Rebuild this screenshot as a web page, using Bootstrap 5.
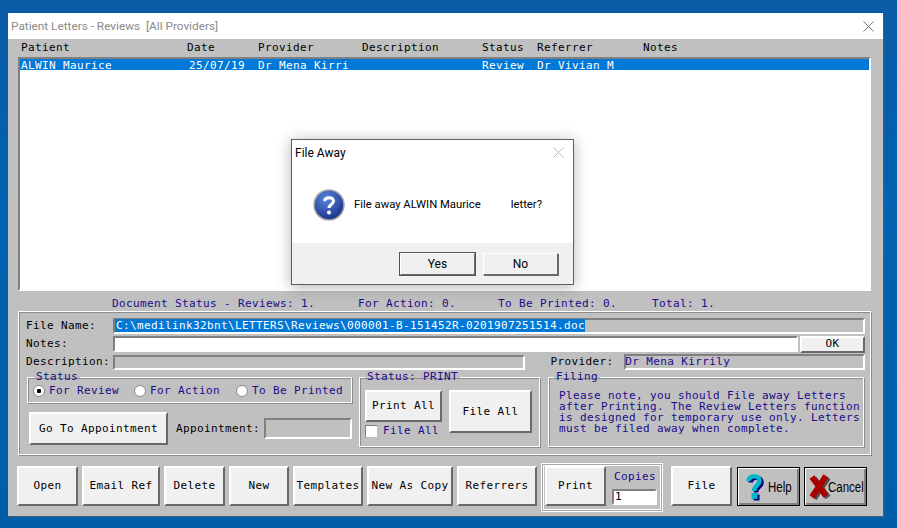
<!DOCTYPE html>
<html lang="en">
  <head>
    <meta charset="UTF-8" />
    <meta name="viewport" content="width=device-width, initial-scale=1.0" />
    <title>Patient Letters - Reviews</title>
    <link
      href="https://cdn.jsdelivr.net/npm/bootstrap@5.3.5/dist/css/bootstrap.min.css"
      rel="stylesheet"
    />
    <style>
      html, body { height: 100%; }
      body {
        margin: 0;
        background: linear-gradient(#0a5ba6, #0063b1 40%, #005ea8);
        overflow: hidden;
        font-family: "DejaVu Sans Mono", monospace;
        font-size: 11px;
        letter-spacing: 0.38px;
        line-height: 12px;
        color: #000;
      }
      .app-window {
        position: relative;
        width: 875px;
        height: 503px;
        margin: 13px 0 0 8px;
        background: #c0c0c0;
        box-shadow: 1px 1px 1px #3c5f80;
      }
      .title-bar {
        height: 26px;
        background: #fff;
        color: #8a8a8a;
        font-family: Roboto, sans-serif;
        font-size: 11.8px;
        letter-spacing: 0;
        padding-left: 3px;
      }
      .title-x { margin-right: 9px; }
      .main-area { padding: 0 12px 0 10px; }
      .col-heads { height: 18px; padding: 3px 0 0 3px; }
      .list-box {
        height: 234px;
        background: #fff;
        border: 2px solid;
        border-color: #808080 #fff #fff #808080;
      }
      .list-sel { background: #0078d7; color: #fff; height: 11px; padding-left: 1px; line-height: 13px; }
      .c1 { width: 166px; }
      .c2 { width: 71px; }
      .c3 { width: 104px; }
      .c4 { width: 120px; }
      .c5 { width: 55px; }
      .c6 { width: 106px; }
      .sel-date { padding-left: 2px; }
      .navy { color: #1a0a8c; }
      .count-line { height: 20px; padding: 7px 0 0 94px; }
      .s1 { width: 246px; }
      .s2 { width: 140px; }
      .s3 { width: 154px; }
      .etched {
        border: 1px solid #fff;
        box-shadow: inset 1px 1px 0 #8c8c8c, 1px 1px 0 #8c8c8c;
      }
      .doc-group { height: 144px; padding: 5px 5px 0 6px; }
      .form-line { height: 18px; }
      .line-label { width: 88px; padding-left: 1px; }
      .sunk {
        border: 2px solid;
        border-color: #808080 #fff #fff #808080;
        height: 16px;
        line-height: 12px;
        white-space: nowrap;
      }
      .sunk-white { background: #fff; }
      .f-file { width: 753px; }
      .f-file mark { background: #0078d7; color: #fff; padding: 0 0 0 1px; }
      .f-notes { width: 686px; }
      .f-desc { width: 413px; height: 15px; }
      .f-prov { width: 241px; text-indent: -1px; }
      .prov-label { width: 99px; padding-left: 25px; }
      .btn-raised {
        background: #f0f0f0;
        border: 2px solid;
        border-color: #fff #696969 #696969 #fff;
        border-radius: 0;
        padding: 0;
        font-family: inherit;
        font-size: inherit;
        letter-spacing: inherit;
        line-height: 12px;
        color: #000;
      }
      .ok-btn { width: 65px; height: 17px; margin-left: 2px; }
      .lower-part { margin: 0 0 0 2px; }
      .left-part { width: 325px; margin-right: 7px; }
      .legend-txt {
        float: none;
        width: auto;
        font-size: inherit;
        line-height: 12px;
        margin: 0;
        padding: 0 2px;
        color: #1a0a8c;
      }
      .status-set .legend-txt { margin-left: 6px; }
      .filing-set .legend-txt { margin-left: -5px; }
      .status-set { height: 32px; width: 325px; }
      .radio-row { height: 16px; padding: 0 0 0 5px; }
      .radio-mark {
        appearance: none;
        width: 12px;
        height: 12px;
        margin: 0 4px 0 0;
        border-radius: 50%;
        background: #fff;
        border: 1px solid #8c8c8c;
        flex: none;
      }
      .radio-mark:checked { background: radial-gradient(circle, #000 2px, #fff 2.5px); }
      .rad-a { width: 85px; }
      .rad-b { width: 86px; }
      .appt-line { margin: 9px 0 0 2px; }
      .appt-btn { width: 139px; height: 33px; }
      .appt-label { width: 96px; padding-left: 8px; }
      .f-appt { width: 88px; height: 21px; }
      .print-set { width: 181px; height: 76px; margin-right: 8px; padding: 7px 0 0 5px; }
      .pa-btn { width: 77px; height: 32px; display: block; }
      .fa-btn { width: 83px; height: 43px; margin-left: 7px; }
      .tick-row { margin-top: 3px; height: 12px; }
      .tick-box {
        appearance: none;
        width: 13px;
        height: 13px;
        margin: 0 5px 0 0;
        background: #fff;
        border: 1px solid;
        border-color: #808080 #c0c0c0 #c0c0c0 #808080;
      }
      .filing-set { width: 316px; height: 76px; padding: 7px 0 0 10px; line-height: 11px; white-space: nowrap; }
      .action-row { height: 49px; margin: 8px 0 0 -1px; }
      .act-btn { height: 40px; margin-top: 3px; margin-right: 4px; flex: none; }
      .w60 { width: 60px; }
      .w61 { width: 61px; }
      .w78 { width: 78px; }
      .w70 { width: 70px; }
      .w86 { width: 86px; }
      .w80 { width: 80px; }
      .print-box {
        width: 122px;
        height: 49px;
        border: 1px solid #fff;
        box-shadow: inset 0 0 0 1px #a6a6a6, inset 0 0 0 2px #fff;
        padding: 2px 0 0 3px;
        margin-right: 8px;
        flex: none;
      }
      .print-box .act-btn { margin: 0; width: 61px; }
      .copies-col { padding: 5px 0 0 6px; }
      .copies-txt { padding-left: 2px; margin-bottom: 6px; }
      .f-copies { width: 45px; padding-left: 1px; }
      .pic-btn {
        width: 63px;
        height: 39px;
        margin-top: 4px;
        margin-right: 4px;
        padding: 0;
        background: #c0c0c0;
        border: 1px solid #000;
        box-shadow: inset 1px 1px 0 #fff, inset -2px -2px 0 #808080;
        font-family: "Liberation Sans", sans-serif;
        font-size: 14px;
        letter-spacing: 0;
        flex: none;
      }
      .file-act { margin-right: 5px; }
      .pic-label { display: inline-block; flex: none; transform: scaleX(0.82); transform-origin: left center; }
      .help-pic { flex: none; margin: 0 4px 0 8px; }
      .cancel-pic { flex: none; margin: 0 -3px 0 4px; }
      .dialog-box {
        position: absolute;
        left: 283px;
        top: 126px;
        width: 283px;
        height: 146px;
        background: #fff;
        border: 1px solid #5f5f5f;
        box-shadow: 0 2px 14px rgba(0, 0, 0, 0.3);
        font-family: Roboto, sans-serif;
        font-size: 12px;
        letter-spacing: 0;
        line-height: 16px;
      }
      .dlg-title { height: 25px; padding-left: 3px; margin-bottom: 1px; }
      .dlg-x { margin-right: 9px; }
      .dlg-body { height: 77px; padding-left: 21px; font-size: 11.3px; }
      .dlg-icon { margin-right: 9px; }
      .dlg-gap { width: 30px; display: inline-block; }
      .dlg-foot { height: 41px; background: #f0f0f0; padding: 10px 15px 0 0; }
      .dlg-btn {
        width: 75px;
        height: 22px;
        margin-left: 8px;
        background: #f0f0f0;
        border: 1px solid;
        border-color: #fff #696969 #696969 #fff;
        box-shadow: 1px 1px 0 #696969;
        padding: 0;
        font-size: 12px;
      }
      .dlg-yes { outline: 1px solid #555; }
    </style>
  </head>
  <body>
    <div class="app-window">
      <div class="title-bar d-flex align-items-center justify-content-between">
        <span>Patient Letters - Reviews&nbsp; [All Providers]</span>
        <svg class="title-x" width="11" height="11" viewBox="0 0 11 11">
          <path d="M0.5 0.5 10.5 10.5M10.5 0.5 0.5 10.5" stroke="#777" fill="none" />
        </svg>
      </div>

      <div class="main-area">
        <div class="col-heads d-flex">
          <span class="c1">Patient</span>
          <span class="c2">Date</span>
          <span class="c3">Provider</span>
          <span class="c4">Description</span>
          <span class="c5">Status</span>
          <span class="c6">Referrer</span>
          <span>Notes</span>
        </div>
        <div class="list-box">
          <div class="list-sel d-flex">
            <span class="c1">ALWIN Maurice</span>
            <span class="c2 sel-date">25/07/19</span>
            <span class="c3">Dr Mena Kirri</span>
            <span class="c4"></span>
            <span class="c5">Review</span>
            <span class="c6">Dr Vivian M</span>
          </div>
        </div>
        <div class="count-line navy d-flex">
          <span class="s1">Document Status - Reviews: 1.</span>
          <span class="s2">For Action: 0.</span>
          <span class="s3">To Be Printed: 0.</span>
          <span>Total: 1.</span>
        </div>

        <div class="doc-group etched">
          <div class="form-line d-flex align-items-center">
            <span class="line-label">File Name:</span>
            <div class="sunk f-file"><mark>C:\medilink32bnt\LETTERS\Reviews\000001-B-151452R-0201907251514.doc</mark></div>
          </div>
          <div class="form-line d-flex align-items-center">
            <span class="line-label">Notes:</span>
            <div class="sunk sunk-white f-notes"></div>
            <button class="btn-raised ok-btn" type="button">OK</button>
          </div>
          <div class="form-line d-flex align-items-center">
            <span class="line-label">Description:</span>
            <div class="sunk f-desc"></div>
            <span class="prov-label">Provider:</span>
            <div class="sunk f-prov navy">Dr Mena Kirrily</div>
          </div>

          <div class="lower-part d-flex">
            <div class="left-part">
              <fieldset class="status-set etched">
                <legend class="legend-txt">Status</legend>
                <div class="radio-row d-flex align-items-center navy">
                  <input class="radio-mark" type="radio" name="st" checked />
                  <span class="rad-a">For Review</span>
                  <input class="radio-mark" type="radio" name="st" />
                  <span class="rad-b">For Action</span>
                  <input class="radio-mark" type="radio" name="st" />
                  <span>To Be Printed</span>
                </div>
              </fieldset>
              <div class="appt-line d-flex align-items-center">
                <button class="btn-raised appt-btn" type="button">Go To Appointment</button>
                <span class="appt-label">Appointment:</span>
                <div class="sunk f-appt"></div>
              </div>
            </div>

            <fieldset class="print-set etched">
              <legend class="legend-txt">Status: PRINT</legend>
              <div class="d-flex">
                <div>
                  <button class="btn-raised pa-btn" type="button">Print All</button>
                  <div class="tick-row d-flex align-items-center navy">
                    <input class="tick-box" type="checkbox" />
                    <span>File All</span>
                  </div>
                </div>
                <button class="btn-raised fa-btn" type="button">File All</button>
              </div>
            </fieldset>

            <fieldset class="filing-set etched navy">
              <legend class="legend-txt">Filing</legend>
              Please note, you should File away Letters<br />
              after Printing. The Review Letters function<br />
              is designed for temporary use only. Letters<br />
              must be filed away when complete.
            </fieldset>
          </div>
        </div>

        <div class="action-row d-flex">
          <button class="btn-raised act-btn w61" type="button">Open</button>
          <button class="btn-raised act-btn w78" type="button">Email Ref</button>
          <button class="btn-raised act-btn w61" type="button">Delete</button>
          <button class="btn-raised act-btn w60" type="button">New</button>
          <button class="btn-raised act-btn w70" type="button">Templates</button>
          <button class="btn-raised act-btn w86" type="button">New As Copy</button>
          <button class="btn-raised act-btn w80" type="button">Referrers</button>
          <div class="print-box d-flex">
            <button class="btn-raised act-btn" type="button">Print</button>
            <div class="copies-col">
              <div class="copies-txt navy">Copies</div>
              <div class="sunk sunk-white f-copies">1</div>
            </div>
          </div>
          <button class="btn-raised act-btn w61 file-act" type="button">File</button>
          <button class="pic-btn d-flex align-items-center" type="button">
            <svg class="help-pic" width="18" height="28" viewBox="0 0 18 28">
              <path d="M2.5 8C3 1.5 13.5 1.5 13.5 8 13.5 12.5 8 12.5 8 18" stroke="#000080" stroke-width="4.5" fill="none" transform="translate(2 1.5)" />
              <rect x="7.5" y="21.5" width="6" height="6" fill="#000080" />
              <path d="M2.5 8C3 1.5 13.5 1.5 13.5 8 13.5 12.5 8 12.5 8 18" stroke="#00b8c8" stroke-width="4.5" fill="none" />
              <rect x="5.5" y="20" width="6" height="6" fill="#00b8c8" />
            </svg>
            <span class="pic-label">Help</span>
          </button>
          <button class="pic-btn d-flex align-items-center" type="button">
            <svg class="cancel-pic" width="22" height="26" viewBox="0 0 22 26">
              <path d="M3 3 17 22M17 2 3 23" stroke="#505050" stroke-width="6" fill="none" transform="translate(2 1.5)" />
              <path d="M3 3 17 22M17 2 3 23" stroke="#a80000" stroke-width="6" fill="none" />
            </svg>
            <span class="pic-label">Cancel</span>
          </button>
        </div>
      </div>

      <div class="dialog-box">
        <div class="dlg-title d-flex align-items-center justify-content-between">
          <span>File Away</span>
          <svg class="dlg-x" width="11" height="11" viewBox="0 0 11 11">
            <path d="M0.5 0.5 10.5 10.5M10.5 0.5 0.5 10.5" stroke="#bbb" fill="none" />
          </svg>
        </div>
        <div class="dlg-body d-flex align-items-center">
          <svg class="dlg-icon" width="32" height="32" viewBox="0 0 32 32">
            <defs>
              <radialGradient id="dlgBlue" cx="0.4" cy="0.3" r="0.8">
                <stop offset="0" stop-color="#5d86e0" />
                <stop offset="1" stop-color="#10287f" />
              </radialGradient>
            </defs>
            <circle cx="16" cy="16" r="15" fill="url(#dlgBlue)" stroke="#a9a9a9" stroke-width="1.5" />
            <path d="M11.5 12C12 7.5 20.5 7.5 20.5 12 20.5 15.5 16 15.5 16 19" stroke="#fff" stroke-width="3" fill="none" />
            <circle cx="16" cy="23.5" r="2" fill="#fff" />
          </svg>
          <span>File away ALWIN Maurice<span class="dlg-gap"></span>letter?</span>
        </div>
        <div class="dlg-foot d-flex justify-content-end">
          <button class="dlg-btn dlg-yes" type="button">Yes</button>
          <button class="dlg-btn" type="button">No</button>
        </div>
      </div>
    </div>

    <script src="https://cdn.jsdelivr.net/npm/bootstrap@5.3.5/dist/js/bootstrap.bundle.min.js"></script>
  </body>
</html>
